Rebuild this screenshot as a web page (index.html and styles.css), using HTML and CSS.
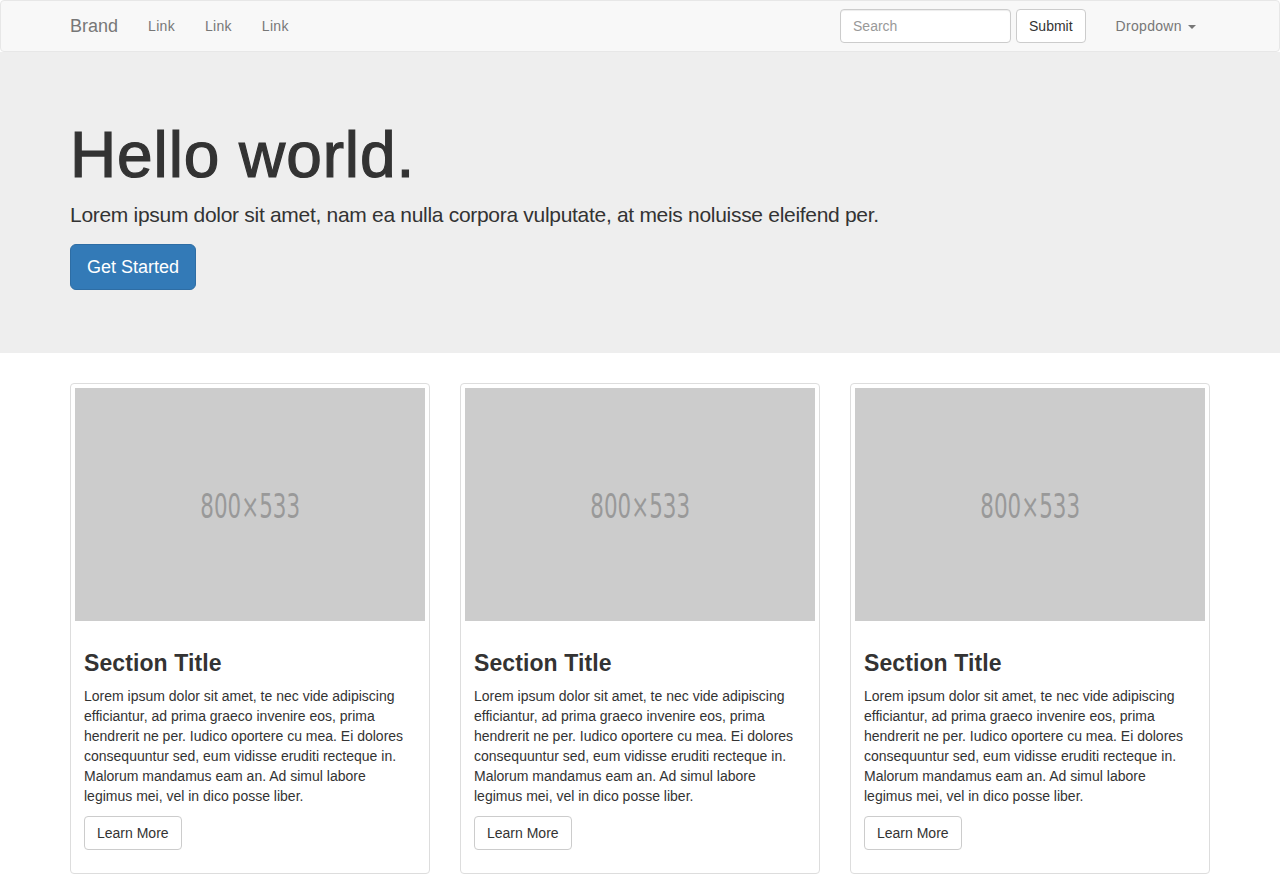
FILE: index.html
```html
<!DOCTYPE html>
<html lang="en">
<head>
<meta charset="utf-8">
<title>Hello world</title>
<link rel="stylesheet" href="styles.css">
</head>
<body>
<nav class="navbar">
  <div class="container nav-inner">
    <a class="brand" href="#">Brand</a>
    <ul class="nav">
      <li><a href="#">Link</a></li>
      <li><a href="#">Link</a></li>
      <li><a href="#">Link</a></li>
    </ul>
    <form class="nav-form">
      <input class="form-control" type="text" placeholder="Search">
      <button class="btn btn-default" type="button">Submit</button>
    </form>
    <ul class="nav nav-right">
      <li><a href="#">Dropdown <span class="caret"></span></a></li>
    </ul>
  </div>
</nav>

<header class="jumbotron">
  <div class="container">
    <h1>Hello world.</h1>
    <p class="lead">Lorem ipsum dolor sit amet, nam ea nulla corpora vulputate, at meis noluisse eleifend per.</p>
    <p class="cta"><a class="btn btn-primary btn-lg" href="#">Get Started</a></p>
  </div>
</header>

<main class="container cards">
  <div class="thumbnail">
    <div class="placeholder"><span>800×533</span></div>
    <div class="caption">
      <h3>Section Title</h3>
      <p>Lorem ipsum dolor sit amet, te nec vide adipiscing<br>efficiantur, ad prima graeco invenire eos, prima<br>hendrerit ne per. Iudico oportere cu mea. Ei dolores<br>consequuntur sed, eum vidisse eruditi recteque in.<br>Malorum mandamus eam an. Ad simul labore<br>legimus mei, vel in dico posse liber.</p>
      <p class="action"><a class="btn btn-default" href="#">Learn More</a></p>
    </div>
  </div>
  <div class="thumbnail">
    <div class="placeholder"><span>800×533</span></div>
    <div class="caption">
      <h3>Section Title</h3>
      <p>Lorem ipsum dolor sit amet, te nec vide adipiscing<br>efficiantur, ad prima graeco invenire eos, prima<br>hendrerit ne per. Iudico oportere cu mea. Ei dolores<br>consequuntur sed, eum vidisse eruditi recteque in.<br>Malorum mandamus eam an. Ad simul labore<br>legimus mei, vel in dico posse liber.</p>
      <p class="action"><a class="btn btn-default" href="#">Learn More</a></p>
    </div>
  </div>
  <div class="thumbnail">
    <div class="placeholder"><span>800×533</span></div>
    <div class="caption">
      <h3>Section Title</h3>
      <p>Lorem ipsum dolor sit amet, te nec vide adipiscing<br>efficiantur, ad prima graeco invenire eos, prima<br>hendrerit ne per. Iudico oportere cu mea. Ei dolores<br>consequuntur sed, eum vidisse eruditi recteque in.<br>Malorum mandamus eam an. Ad simul labore<br>legimus mei, vel in dico posse liber.</p>
      <p class="action"><a class="btn btn-default" href="#">Learn More</a></p>
    </div>
  </div>
</main>
</body>
</html>
```

FILE: styles.css
```css
* { box-sizing: border-box; }

html, body {
  margin: 0;
  padding: 0;
}

body {
  font-family: "Liberation Sans", Arial, sans-serif;
  font-size: 14px;
  line-height: 1.42857143;
  color: #333;
  background: #fff;
}

a { text-decoration: none; }

.container {
  width: 1170px;
  margin: 0 auto;
  padding: 0 15px;
}

/* Navbar */
.navbar {
  background: #f8f8f8;
  border: 1px solid #e7e7e7;
  border-radius: 4px;
  height: 52px;
}

.nav-inner {
  display: flex;
  align-items: center;
  height: 50px;
}

.brand {
  font-size: 18px;
  line-height: 20px;
  color: #777;
  padding: 15px 15px 15px 0;
}

.nav {
  list-style: none;
  margin: 0;
  padding: 0;
  display: flex;
}

.nav a {
  display: block;
  padding: 15px;
  line-height: 20px;
  color: #777;
  font-size: 14px;
  letter-spacing: 0.3px;
}

.nav-form {
  margin-left: auto;
  display: flex;
  align-items: center;
  gap: 5px;
  padding-right: 15px;
}

.form-control {
  width: 171px;
  height: 34px;
  padding: 6px 12px;
  font-family: inherit;
  font-size: 14px;
  line-height: 1.42857143;
  color: #555;
  background: #fff;
  border: 1px solid #ccc;
  border-radius: 4px;
  box-shadow: inset 0 1px 1px rgba(0, 0, 0, .075);
  outline: none;
}

.form-control::placeholder { color: #999; }

.nav-right a { padding-right: 14px; }

.caret {
  display: inline-block;
  width: 0;
  height: 0;
  margin-left: 2px;
  vertical-align: middle;
  border-top: 4px solid #777;
  border-left: 4px solid transparent;
  border-right: 4px solid transparent;
}

/* Buttons */
.btn {
  display: inline-block;
  padding: 6px 12px;
  font-family: inherit;
  font-size: 14px;
  line-height: 20px;
  border: 1px solid transparent;
  border-radius: 4px;
  cursor: pointer;
  white-space: nowrap;
}

.btn-default {
  color: #333;
  background: #fff;
  border-color: #ccc;
}

.btn-primary {
  color: #fff;
  background: #337ab7;
  border-color: #2e6da4;
}

.btn-lg {
  padding: 10px 16px;
  font-size: 18px;
  line-height: 24px;
  border-radius: 6px;
}

/* Jumbotron */
.jumbotron {
  background: #eee;
  padding: 48px 0;
  margin-bottom: 30px;
}

.jumbotron h1 {
  margin: 20px 0 10px;
  font-size: 64px;
  line-height: 70px;
  font-weight: 400;
  letter-spacing: 0.9px;
  -webkit-text-stroke: 1.2px #333;
  color: #333;
}

.jumbotron .lead {
  margin: 0 0 15px;
  font-size: 21px;
  line-height: 1.4;
  font-weight: 200;
  letter-spacing: -0.3px;
}

.jumbotron .cta { margin: 0 0 15px; }

/* Cards */
.cards {
  display: grid;
  grid-template-columns: repeat(3, 360px);
  gap: 30px;
}

.thumbnail {
  padding: 4px;
  border: 1px solid #ddd;
  border-radius: 4px;
  margin-bottom: 20px;
  background: #fff;
}

.placeholder {
  height: 233px;
  background: #ccc;
  display: flex;
  align-items: center;
  justify-content: center;
}

.placeholder span {
  display: inline-block;
  font-family: "DejaVu Sans Condensed", "Liberation Sans", sans-serif;
  font-size: 34px;
  line-height: 34px;
  color: #999;
  transform: scaleX(0.7);
  margin-top: 3px;
}

.caption {
  padding: 9px;
  color: #333;
}

.caption h3 {
  margin: 20px 0 10px;
  font-size: 23px;
  line-height: 26px;
  font-weight: 700;
  letter-spacing: 0.1px;
}

.caption p {
  margin: 0 0 10px;
}
```
